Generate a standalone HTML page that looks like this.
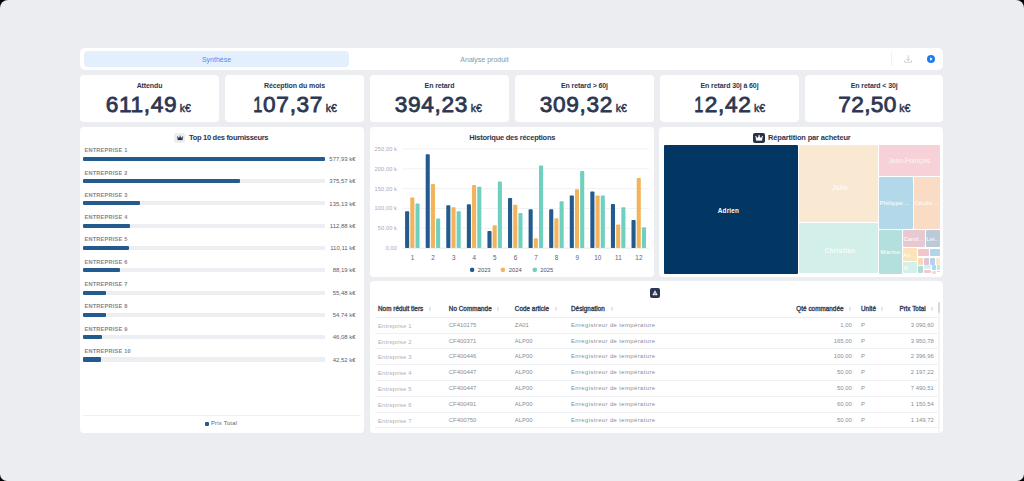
<!DOCTYPE html><html><head><meta charset="utf-8"><style>
*{margin:0;padding:0;box-sizing:border-box}
html,body{width:1024px;height:481px;background:#000;overflow:hidden}
body{font-family:"Liberation Sans", sans-serif;color:#2d3650}
.frame{position:absolute;left:0;top:0;width:1024px;height:481px;border-radius:8px 8px 7px 7px;background:#ebedf1;overflow:hidden}
.card{position:absolute;background:#fff;border-radius:4px}
.abs{position:absolute;white-space:nowrap}
</style></head><body><div class="frame">
<div class="card" style="left:80px;top:48px;width:863px;height:22px;border-radius:5px"></div>
<div class="abs" style="left:84px;top:51px;width:265px;height:16px;border-radius:4px;background:#e3effc"></div>
<div class="abs" style="left:84px;top:51.8px;width:265px;height:16px;line-height:16px;text-align:center;font-size:7px;color:#4a8ff2">Synthèse</div>
<div class="abs" style="left:384px;top:51.8px;width:201px;height:16px;line-height:16px;text-align:center;font-size:7px;color:#8d96a3">Analyse produit</div>
<div class="abs" style="left:890.5px;top:52px;width:1px;height:14px;background:#f0f1f3"></div>
<svg class="abs" style="left:903px;top:54px" width="10" height="10" viewBox="0 0 10 10"><path d="M5.2 1.2v5.3M3.4 4.8l1.8 1.8 1.8-1.8M1.8 6.4v1.9h6.8V6.4" fill="none" stroke="#bcc3cd" stroke-width="0.75"/></svg>
<svg class="abs" style="left:926.3px;top:54.3px" width="10" height="10" viewBox="0 0 10 10"><circle cx="5" cy="5" r="4" fill="#1b7cf4"/><path d="M4.1 3.3L6.6 5 4.1 6.7z" fill="#fff"/></svg>
<div class="card" style="left:80.00px;top:75px;width:139.00px;height:47px"></div>
<div class="abs" style="left:80.00px;top:80.7px;width:139.00px;text-align:center;font-size:7px;line-height:9px;font-weight:bold;letter-spacing:-0.1px;color:#2d3650">Attendu</div>
<div class="abs" style="left:80.00px;top:92.2px;width:139.00px;margin-left:-1.2px;text-align:center;line-height:24px;font-weight:bold;color:#2d3650"><span style="font-size:22.7px;letter-spacing:0.65px;font-weight:normal;-webkit-text-stroke:0.8px #2d3650">611,49</span><span style="font-size:10.5px;margin-left:2.6px;font-weight:normal;-webkit-text-stroke:0.45px #2d3650">k€</span></div>
<div class="card" style="left:225.00px;top:75px;width:139.00px;height:47px"></div>
<div class="abs" style="left:225.00px;top:80.7px;width:139.00px;text-align:center;font-size:7px;line-height:9px;font-weight:bold;letter-spacing:-0.1px;color:#2d3650">Réception du mois</div>
<div class="abs" style="left:225.00px;top:92.2px;width:139.00px;margin-left:-1.2px;text-align:center;line-height:24px;font-weight:bold;color:#2d3650"><span style="font-size:22.7px;letter-spacing:0.65px;font-weight:normal;-webkit-text-stroke:0.8px #2d3650"><span style="display:inline-block;transform:scaleX(0.72);transform-origin:85% 50%">1</span>07,37</span><span style="font-size:10.5px;margin-left:2.6px;font-weight:normal;-webkit-text-stroke:0.45px #2d3650">k€</span></div>
<div class="card" style="left:370.00px;top:75px;width:139.00px;height:47px"></div>
<div class="abs" style="left:370.00px;top:80.7px;width:139.00px;text-align:center;font-size:7px;line-height:9px;font-weight:bold;letter-spacing:-0.1px;color:#2d3650">En retard</div>
<div class="abs" style="left:370.00px;top:92.2px;width:139.00px;margin-left:-1.2px;text-align:center;line-height:24px;font-weight:bold;color:#2d3650"><span style="font-size:22.7px;letter-spacing:0.65px;font-weight:normal;-webkit-text-stroke:0.8px #2d3650">394,23</span><span style="font-size:10.5px;margin-left:2.6px;font-weight:normal;-webkit-text-stroke:0.45px #2d3650">k€</span></div>
<div class="card" style="left:515.00px;top:75px;width:139.00px;height:47px"></div>
<div class="abs" style="left:515.00px;top:80.7px;width:139.00px;text-align:center;font-size:7px;line-height:9px;font-weight:bold;letter-spacing:-0.1px;color:#2d3650">En retard > 60j</div>
<div class="abs" style="left:515.00px;top:92.2px;width:139.00px;margin-left:-1.2px;text-align:center;line-height:24px;font-weight:bold;color:#2d3650"><span style="font-size:22.7px;letter-spacing:0.65px;font-weight:normal;-webkit-text-stroke:0.8px #2d3650">309,32</span><span style="font-size:10.5px;margin-left:2.6px;font-weight:normal;-webkit-text-stroke:0.45px #2d3650">k€</span></div>
<div class="card" style="left:660.00px;top:75px;width:139.00px;height:47px"></div>
<div class="abs" style="left:660.00px;top:80.7px;width:139.00px;text-align:center;font-size:7px;line-height:9px;font-weight:bold;letter-spacing:-0.1px;color:#2d3650">En retard 30j à 60j</div>
<div class="abs" style="left:660.00px;top:92.2px;width:139.00px;margin-left:-1.2px;text-align:center;line-height:24px;font-weight:bold;color:#2d3650"><span style="font-size:22.7px;letter-spacing:0.65px;font-weight:normal;-webkit-text-stroke:0.8px #2d3650"><span style="display:inline-block;transform:scaleX(0.72);transform-origin:85% 50%">1</span>2,42</span><span style="font-size:10.5px;margin-left:2.6px;font-weight:normal;-webkit-text-stroke:0.45px #2d3650">k€</span></div>
<div class="card" style="left:805.00px;top:75px;width:138.30px;height:47px"></div>
<div class="abs" style="left:805.00px;top:80.7px;width:138.30px;text-align:center;font-size:7px;line-height:9px;font-weight:bold;letter-spacing:-0.1px;color:#2d3650">En retard < 30j</div>
<div class="abs" style="left:805.00px;top:92.2px;width:138.30px;margin-left:0.2px;text-align:center;line-height:24px;font-weight:bold;color:#2d3650"><span style="font-size:22.7px;letter-spacing:0.35px;font-weight:normal;-webkit-text-stroke:0.8px #2d3650">72,50</span><span style="font-size:10.5px;margin-left:2.6px;font-weight:normal;-webkit-text-stroke:0.45px #2d3650">k€</span></div>
<div class="card" style="left:80px;top:127px;width:284px;height:306px"></div>
<div class="abs" style="left:174px;top:133px;width:11px;height:10px;border-radius:2px;background:#eceef2"></div>
<svg class="abs" style="left:174.5px;top:132.8px" width="10" height="10" viewBox="0 0 10 10"><g transform="translate(5.1 5) scale(0.82) translate(-5.1 -5)"><path d="M2.3 7.4L1.8 3.7 3.7 5.1 5.1 2.6 6.5 5.1 8.4 3.7 7.9 7.4Z" fill="#2d3650" stroke="#2d3650" stroke-width="0.35" stroke-linejoin="round"/><circle cx="1.8" cy="3.5" r="0.55" fill="#2d3650"/><circle cx="5.1" cy="2.4" r="0.55" fill="#2d3650"/><circle cx="8.4" cy="3.5" r="0.55" fill="#2d3650"/></g></svg>
<div class="abs" style="left:189px;top:133px;font-size:7.5px;line-height:9px;font-weight:bold;letter-spacing:-0.3px;color:#2d3650">Top 10 des fournisseurs</div>
<div class="abs" style="left:84.5px;top:147.20px;font-size:5.6px;line-height:7px;letter-spacing:0.22px;color:#838893;font-weight:bold">ENTREPRISE 1</div>
<div class="abs" style="left:83px;top:156.70px;width:242px;height:4.2px;background:#eceef2;border-radius:1px"></div>
<div class="abs" style="left:83px;top:156.70px;width:242.00px;height:4.2px;background:#235b8e;border-radius:1px"></div>
<div class="abs" style="left:255.7px;top:155.90px;width:100px;text-align:right;font-size:6px;line-height:7px;color:#596070">577,93 k€</div>
<div class="abs" style="left:84.5px;top:169.50px;font-size:5.6px;line-height:7px;letter-spacing:0.22px;color:#838893;font-weight:bold">ENTREPRISE 2</div>
<div class="abs" style="left:83px;top:179.00px;width:242px;height:4.2px;background:#eceef2;border-radius:1px"></div>
<div class="abs" style="left:83px;top:179.00px;width:157.26px;height:4.2px;background:#235b8e;border-radius:1px"></div>
<div class="abs" style="left:255.7px;top:178.20px;width:100px;text-align:right;font-size:6px;line-height:7px;color:#596070">375,57 k€</div>
<div class="abs" style="left:84.5px;top:191.80px;font-size:5.6px;line-height:7px;letter-spacing:0.22px;color:#838893;font-weight:bold">ENTREPRISE 3</div>
<div class="abs" style="left:83px;top:201.30px;width:242px;height:4.2px;background:#eceef2;border-radius:1px"></div>
<div class="abs" style="left:83px;top:201.30px;width:56.58px;height:4.2px;background:#235b8e;border-radius:1px"></div>
<div class="abs" style="left:255.7px;top:200.50px;width:100px;text-align:right;font-size:6px;line-height:7px;color:#596070">135,13 k€</div>
<div class="abs" style="left:84.5px;top:214.10px;font-size:5.6px;line-height:7px;letter-spacing:0.22px;color:#838893;font-weight:bold">ENTREPRISE 4</div>
<div class="abs" style="left:83px;top:223.60px;width:242px;height:4.2px;background:#eceef2;border-radius:1px"></div>
<div class="abs" style="left:83px;top:223.60px;width:47.27px;height:4.2px;background:#235b8e;border-radius:1px"></div>
<div class="abs" style="left:255.7px;top:222.80px;width:100px;text-align:right;font-size:6px;line-height:7px;color:#596070">112,88 k€</div>
<div class="abs" style="left:84.5px;top:236.40px;font-size:5.6px;line-height:7px;letter-spacing:0.22px;color:#838893;font-weight:bold">ENTREPRISE 5</div>
<div class="abs" style="left:83px;top:245.90px;width:242px;height:4.2px;background:#eceef2;border-radius:1px"></div>
<div class="abs" style="left:83px;top:245.90px;width:46.11px;height:4.2px;background:#235b8e;border-radius:1px"></div>
<div class="abs" style="left:255.7px;top:245.10px;width:100px;text-align:right;font-size:6px;line-height:7px;color:#596070">110,11 k€</div>
<div class="abs" style="left:84.5px;top:258.70px;font-size:5.6px;line-height:7px;letter-spacing:0.22px;color:#838893;font-weight:bold">ENTREPRISE 6</div>
<div class="abs" style="left:83px;top:268.20px;width:242px;height:4.2px;background:#eceef2;border-radius:1px"></div>
<div class="abs" style="left:83px;top:268.20px;width:36.93px;height:4.2px;background:#235b8e;border-radius:1px"></div>
<div class="abs" style="left:255.7px;top:267.40px;width:100px;text-align:right;font-size:6px;line-height:7px;color:#596070">88,19 k€</div>
<div class="abs" style="left:84.5px;top:281.00px;font-size:5.6px;line-height:7px;letter-spacing:0.22px;color:#838893;font-weight:bold">ENTREPRISE 7</div>
<div class="abs" style="left:83px;top:290.50px;width:242px;height:4.2px;background:#eceef2;border-radius:1px"></div>
<div class="abs" style="left:83px;top:290.50px;width:23.23px;height:4.2px;background:#235b8e;border-radius:1px"></div>
<div class="abs" style="left:255.7px;top:289.70px;width:100px;text-align:right;font-size:6px;line-height:7px;color:#596070">55,48 k€</div>
<div class="abs" style="left:84.5px;top:303.30px;font-size:5.6px;line-height:7px;letter-spacing:0.22px;color:#838893;font-weight:bold">ENTREPRISE 8</div>
<div class="abs" style="left:83px;top:312.80px;width:242px;height:4.2px;background:#eceef2;border-radius:1px"></div>
<div class="abs" style="left:83px;top:312.80px;width:22.92px;height:4.2px;background:#235b8e;border-radius:1px"></div>
<div class="abs" style="left:255.7px;top:312.00px;width:100px;text-align:right;font-size:6px;line-height:7px;color:#596070">54,74 k€</div>
<div class="abs" style="left:84.5px;top:325.60px;font-size:5.6px;line-height:7px;letter-spacing:0.22px;color:#838893;font-weight:bold">ENTREPRISE 9</div>
<div class="abs" style="left:83px;top:335.10px;width:242px;height:4.2px;background:#eceef2;border-radius:1px"></div>
<div class="abs" style="left:83px;top:335.10px;width:19.30px;height:4.2px;background:#235b8e;border-radius:1px"></div>
<div class="abs" style="left:255.7px;top:334.30px;width:100px;text-align:right;font-size:6px;line-height:7px;color:#596070">46,08 k€</div>
<div class="abs" style="left:84.5px;top:347.90px;font-size:5.6px;line-height:7px;letter-spacing:0.22px;color:#838893;font-weight:bold">ENTREPRISE 10</div>
<div class="abs" style="left:83px;top:357.40px;width:242px;height:4.2px;background:#eceef2;border-radius:1px"></div>
<div class="abs" style="left:83px;top:357.40px;width:17.80px;height:4.2px;background:#235b8e;border-radius:1px"></div>
<div class="abs" style="left:255.7px;top:356.60px;width:100px;text-align:right;font-size:6px;line-height:7px;color:#596070">42,52 k€</div>
<div class="abs" style="left:83px;top:415px;width:278px;height:1px;background:#eef0f3"></div>
<div class="abs" style="left:205px;top:422px;width:4px;height:4px;border-radius:1px;background:#235b8e"></div>
<div class="abs" style="left:211px;top:420px;font-size:5.8px;line-height:7px;letter-spacing:0.25px;color:#5a6272">Prix Total</div>
<div class="card" style="left:370px;top:127px;width:284px;height:150px"></div>
<div class="abs" style="left:370px;top:132.5px;width:284.5px;text-align:center;font-size:7.5px;line-height:9px;font-weight:bold;letter-spacing:-0.25px;color:#2d3650">Historique des réceptions</div>
<svg class="abs" style="left:370px;top:127px" width="285" height="150" viewBox="370 127 285 150"><rect x="402.3" y="247.60" width="247" height="1" fill="#e3e6ea"/><text x="397" y="250.10" text-anchor="end" font-size="5.6" letter-spacing="0.12" fill="#a3aab6" font-family='"Liberation Sans", sans-serif'>0,00</text><rect x="402.3" y="227.78" width="247" height="1" fill="#f1f2f4"/><text x="397" y="230.28" text-anchor="end" font-size="5.6" letter-spacing="0.12" fill="#a3aab6" font-family='"Liberation Sans", sans-serif'>50,00 k</text><rect x="402.3" y="207.96" width="247" height="1" fill="#f1f2f4"/><text x="397" y="210.46" text-anchor="end" font-size="5.6" letter-spacing="0.12" fill="#a3aab6" font-family='"Liberation Sans", sans-serif'>100,00 k</text><rect x="402.3" y="188.14" width="247" height="1" fill="#f1f2f4"/><text x="397" y="190.64" text-anchor="end" font-size="5.6" letter-spacing="0.12" fill="#a3aab6" font-family='"Liberation Sans", sans-serif'>150,00 k</text><rect x="402.3" y="168.32" width="247" height="1" fill="#f1f2f4"/><text x="397" y="170.82" text-anchor="end" font-size="5.6" letter-spacing="0.12" fill="#a3aab6" font-family='"Liberation Sans", sans-serif'>200,00 k</text><rect x="402.3" y="148.50" width="247" height="1" fill="#f1f2f4"/><text x="397" y="151.00" text-anchor="end" font-size="5.6" letter-spacing="0.12" fill="#a3aab6" font-family='"Liberation Sans", sans-serif'>250,00 k</text><rect x="405.09" y="211.35" width="4.1" height="36.75" rx="0.8" fill="#235b8e"/><rect x="410.29" y="197.48" width="4.1" height="50.62" rx="0.8" fill="#f2b35c"/><rect x="415.49" y="203.47" width="4.1" height="44.63" rx="0.8" fill="#6fd0c0"/><text x="412.59" y="259.5" text-anchor="middle" font-size="6.3" letter-spacing="0.2" fill="#5a6170" font-family='"Liberation Sans", sans-serif'>1</text><rect x="425.68" y="154.15" width="4.1" height="93.95" rx="0.8" fill="#235b8e"/><rect x="430.88" y="183.88" width="4.1" height="64.22" rx="0.8" fill="#f2b35c"/><rect x="436.07" y="218.57" width="4.1" height="29.53" rx="0.8" fill="#6fd0c0"/><text x="433.18" y="259.5" text-anchor="middle" font-size="6.3" letter-spacing="0.2" fill="#5a6170" font-family='"Liberation Sans", sans-serif'>2</text><rect x="446.26" y="205.29" width="4.1" height="42.81" rx="0.8" fill="#235b8e"/><rect x="451.46" y="207.27" width="4.1" height="40.83" rx="0.8" fill="#f2b35c"/><rect x="456.66" y="211.35" width="4.1" height="36.75" rx="0.8" fill="#6fd0c0"/><text x="453.76" y="259.5" text-anchor="middle" font-size="6.3" letter-spacing="0.2" fill="#5a6170" font-family='"Liberation Sans", sans-serif'>3</text><rect x="466.84" y="204.18" width="4.1" height="43.92" rx="0.8" fill="#235b8e"/><rect x="472.04" y="185.11" width="4.1" height="62.99" rx="0.8" fill="#f2b35c"/><rect x="477.24" y="186.82" width="4.1" height="61.28" rx="0.8" fill="#6fd0c0"/><text x="474.34" y="259.5" text-anchor="middle" font-size="6.3" letter-spacing="0.2" fill="#5a6170" font-family='"Liberation Sans", sans-serif'>4</text><rect x="487.43" y="231.05" width="4.1" height="17.05" rx="0.8" fill="#235b8e"/><rect x="492.62" y="225.23" width="4.1" height="22.87" rx="0.8" fill="#f2b35c"/><rect x="497.82" y="181.39" width="4.1" height="66.71" rx="0.8" fill="#6fd0c0"/><text x="494.93" y="259.5" text-anchor="middle" font-size="6.3" letter-spacing="0.2" fill="#5a6170" font-family='"Liberation Sans", sans-serif'>5</text><rect x="508.01" y="197.96" width="4.1" height="50.14" rx="0.8" fill="#235b8e"/><rect x="513.21" y="204.69" width="4.1" height="43.41" rx="0.8" fill="#f2b35c"/><rect x="518.41" y="213.06" width="4.1" height="35.04" rx="0.8" fill="#6fd0c0"/><text x="515.51" y="259.5" text-anchor="middle" font-size="6.3" letter-spacing="0.2" fill="#5a6170" font-family='"Liberation Sans", sans-serif'>6</text><rect x="528.59" y="209.25" width="4.1" height="38.85" rx="0.8" fill="#235b8e"/><rect x="533.79" y="238.19" width="4.1" height="9.91" rx="0.8" fill="#f2b35c"/><rect x="538.99" y="165.45" width="4.1" height="82.65" rx="0.8" fill="#6fd0c0"/><text x="536.09" y="259.5" text-anchor="middle" font-size="6.3" letter-spacing="0.2" fill="#5a6170" font-family='"Liberation Sans", sans-serif'>7</text><rect x="549.17" y="209.25" width="4.1" height="38.85" rx="0.8" fill="#235b8e"/><rect x="554.38" y="218.17" width="4.1" height="29.93" rx="0.8" fill="#f2b35c"/><rect x="559.57" y="201.32" width="4.1" height="46.78" rx="0.8" fill="#6fd0c0"/><text x="556.67" y="259.5" text-anchor="middle" font-size="6.3" letter-spacing="0.2" fill="#5a6170" font-family='"Liberation Sans", sans-serif'>8</text><rect x="569.76" y="195.38" width="4.1" height="52.72" rx="0.8" fill="#235b8e"/><rect x="574.96" y="189.19" width="4.1" height="58.91" rx="0.8" fill="#f2b35c"/><rect x="580.16" y="171.00" width="4.1" height="77.10" rx="0.8" fill="#6fd0c0"/><text x="577.26" y="259.5" text-anchor="middle" font-size="6.3" letter-spacing="0.2" fill="#5a6170" font-family='"Liberation Sans", sans-serif'>9</text><rect x="590.34" y="191.41" width="4.1" height="56.69" rx="0.8" fill="#235b8e"/><rect x="595.54" y="195.38" width="4.1" height="52.72" rx="0.8" fill="#f2b35c"/><rect x="600.74" y="195.58" width="4.1" height="52.52" rx="0.8" fill="#6fd0c0"/><text x="597.84" y="259.5" text-anchor="middle" font-size="6.3" letter-spacing="0.2" fill="#5a6170" font-family='"Liberation Sans", sans-serif'>10</text><rect x="610.92" y="204.10" width="4.1" height="44.00" rx="0.8" fill="#235b8e"/><rect x="616.12" y="224.43" width="4.1" height="23.67" rx="0.8" fill="#f2b35c"/><rect x="621.32" y="207.27" width="4.1" height="40.83" rx="0.8" fill="#6fd0c0"/><text x="618.42" y="259.5" text-anchor="middle" font-size="6.3" letter-spacing="0.2" fill="#5a6170" font-family='"Liberation Sans", sans-serif'>11</text><rect x="631.51" y="219.96" width="4.1" height="28.14" rx="0.8" fill="#235b8e"/><rect x="636.71" y="178.10" width="4.1" height="70.00" rx="0.8" fill="#f2b35c"/><rect x="641.91" y="227.33" width="4.1" height="20.77" rx="0.8" fill="#6fd0c0"/><text x="639.01" y="259.5" text-anchor="middle" font-size="6.3" letter-spacing="0.2" fill="#5a6170" font-family='"Liberation Sans", sans-serif'>12</text><rect x="470" y="267.8" width="4.2" height="4.2" rx="1.4" fill="#235b8e"/><text x="477.7" y="272.2" font-size="5.8" fill="#4a5262" font-family='"Liberation Sans", sans-serif'>2023</text><rect x="500.8" y="267.8" width="4.2" height="4.2" rx="1.4" fill="#f2b35c"/><text x="508.8" y="272.2" font-size="5.8" fill="#4a5262" font-family='"Liberation Sans", sans-serif'>2024</text><rect x="532.7" y="267.8" width="4.2" height="4.2" rx="1.4" fill="#6fd0c0"/><text x="540.3" y="272.2" font-size="5.8" fill="#4a5262" font-family='"Liberation Sans", sans-serif'>2025</text></svg>
<div class="card" style="left:659px;top:127px;width:284.3px;height:150px"></div>
<div class="abs" style="left:753px;top:132.8px;width:11.5px;height:10px;border-radius:2px;background:#2a3147"></div>
<svg class="abs" style="left:753.6px;top:132.6px" width="10" height="10" viewBox="0 0 10 10"><path d="M2.3 7.4L1.8 3.7 3.7 5.1 5.1 2.6 6.5 5.1 8.4 3.7 7.9 7.4Z" fill="#ffffff" stroke="#ffffff" stroke-width="0.35" stroke-linejoin="round"/><circle cx="1.8" cy="3.5" r="0.55" fill="#ffffff"/><circle cx="5.1" cy="2.4" r="0.55" fill="#ffffff"/><circle cx="8.4" cy="3.5" r="0.55" fill="#ffffff"/></svg>
<div class="abs" style="left:768px;top:132.5px;font-size:7.5px;line-height:9px;font-weight:bold;letter-spacing:-0.17px;color:#2d3650">Répartition par acheteur</div>
<div class="abs" style="left:664px;top:145px;width:134.00px;height:128.50px;background:#023763;border-radius:1px"></div>
<div class="abs" style="left:799px;top:145px;width:79.00px;height:76.60px;background:#fae9d2;border-radius:1px"></div>
<div class="abs" style="left:799px;top:222.6px;width:79.00px;height:50.90px;background:#d3efea;border-radius:1px"></div>
<div class="abs" style="left:879px;top:145px;width:61.00px;height:31.10px;background:#f6d1d8;border-radius:1px"></div>
<div class="abs" style="left:879px;top:177.1px;width:34.00px;height:51.90px;background:#b3d8ea;border-radius:1px"></div>
<div class="abs" style="left:914px;top:177.1px;width:26.00px;height:51.90px;background:#fadcc5;border-radius:1px"></div>
<div class="abs" style="left:879px;top:230px;width:22.60px;height:43.50px;background:#b3e0dc;border-radius:1px"></div>
<div class="abs" style="left:902.6px;top:230px;width:22.60px;height:17.30px;background:#e8c9d2;border-radius:1px"></div>
<div class="abs" style="left:926.2px;top:230px;width:13.80px;height:17.30px;background:#bacad9;border-radius:1px"></div>
<div class="abs" style="left:902.6px;top:248.3px;width:14.00px;height:12.30px;background:#fbe3bb;border-radius:1px"></div>
<div class="abs" style="left:902.6px;top:261.6px;width:14.00px;height:11.90px;background:#d3f0eb;border-radius:1px"></div>
<div class="abs" style="left:917.9px;top:248.5px;width:11.30px;height:7.90px;background:#f2c6cc;border-radius:1px"></div>
<div class="abs" style="left:930.2px;top:248.5px;width:9.80px;height:7.90px;background:#b1d6ea;border-radius:1px"></div>
<div class="abs" style="left:917.9px;top:257.5px;width:5.30px;height:7.10px;background:#fbd7ba;border-radius:1px"></div>
<div class="abs" style="left:924.2px;top:257.5px;width:5.00px;height:7.10px;background:#dec5d6;border-radius:1px"></div>
<div class="abs" style="left:930.2px;top:257.5px;width:4.60px;height:7.10px;background:#b5d0f0;border-radius:1px"></div>
<div class="abs" style="left:935.6px;top:257.5px;width:4.40px;height:7.10px;background:#fde8c6;border-radius:1px"></div>
<div class="abs" style="left:917.9px;top:265.6px;width:5.30px;height:7.90px;background:#aedcd7;border-radius:1px"></div>
<div class="abs" style="left:924.2px;top:265.4px;width:6.40px;height:4.00px;background:#d5f2ec;border-radius:1px"></div>
<div class="abs" style="left:924.2px;top:270.3px;width:6.40px;height:3.20px;background:#f3c8ce;border-radius:1px"></div>
<div class="abs" style="left:931.6px;top:265.4px;width:4.40px;height:4.80px;background:#a9d9f6;border-radius:1px"></div>
<div class="abs" style="left:937px;top:265.4px;width:3.00px;height:4.80px;background:#a8eef4;border-radius:1px"></div>
<div class="abs" style="left:931.6px;top:271px;width:4.40px;height:2.50px;background:#fbd9bf;border-radius:1px"></div>
<div class="abs" style="left:937px;top:271px;width:3.00px;height:1.40px;background:#f3c8ce;border-radius:1px"></div>
<div class="abs" style="left:664px;top:145px;width:134.00px;height:128.50px;overflow:hidden"><div class="abs" style="left:24.50px;top:61.70px;width:80px;text-align:center;font-size:6.4px;line-height:8px;font-weight:bold;letter-spacing:0.2px;color:rgba(255,255,255,1)">Adrien</div></div>
<div class="abs" style="left:799px;top:145px;width:79.00px;height:76.60px;overflow:hidden"><div class="abs" style="left:1.00px;top:38.90px;width:80px;text-align:center;font-size:6.4px;line-height:8px;font-weight:bold;letter-spacing:0.3px;color:rgba(255,255,255,0.8)">Julie</div></div>
<div class="abs" style="left:799px;top:222.6px;width:79.00px;height:50.90px;overflow:hidden"><div class="abs" style="left:1.00px;top:24.90px;width:80px;text-align:center;font-size:6.4px;line-height:8px;font-weight:bold;letter-spacing:0.35px;color:rgba(255,255,255,0.8)">Christian</div></div>
<div class="abs" style="left:879px;top:145px;width:61.00px;height:31.10px;overflow:hidden"><div class="abs" style="left:-9.70px;top:11.90px;width:80px;text-align:center;font-size:6.4px;line-height:8px;font-weight:normal;letter-spacing:0.1px;color:rgba(255,255,255,0.8)">Jean-François</div></div>
<div class="abs" style="left:879px;top:177.1px;width:34.00px;height:51.90px;overflow:hidden"><div class="abs" style="left:-24.80px;top:22.40px;width:80px;text-align:center;font-size:6.0px;line-height:8px;font-weight:bold;letter-spacing:0.0px;color:rgba(255,255,255,0.8)">Philippe <span style="font-size:0.75em">…</span></div></div>
<div class="abs" style="left:914px;top:177.1px;width:26.00px;height:51.90px;overflow:hidden"><div class="abs" style="left:-27.70px;top:22.40px;width:80px;text-align:center;font-size:6.0px;line-height:8px;font-weight:bold;letter-spacing:0.0px;color:rgba(255,255,255,0.8)">Cécile <span style="font-size:0.75em">…</span></div></div>
<div class="abs" style="left:879px;top:230px;width:22.60px;height:43.50px;overflow:hidden"><div class="abs" style="left:-28.60px;top:18.00px;width:80px;text-align:center;font-size:6.0px;line-height:8px;font-weight:bold;letter-spacing:0.05px;color:rgba(255,255,255,0.8)">Marine</div></div>
<div class="abs" style="left:902.6px;top:230px;width:22.60px;height:17.30px;overflow:hidden"><div class="abs" style="left:-29.40px;top:5.20px;width:80px;text-align:center;font-size:5.8px;line-height:8px;font-weight:bold;letter-spacing:0.0px;color:rgba(255,255,255,0.8)">Carol<span style="font-size:0.75em">…</span></div></div>
<div class="abs" style="left:926.2px;top:230px;width:13.80px;height:17.30px;overflow:hidden"><div class="abs" style="left:-33.70px;top:5.20px;width:80px;text-align:center;font-size:5.6px;line-height:8px;font-weight:bold;letter-spacing:0px;color:rgba(255,255,255,0.8)">Lei<span style="font-size:0.75em">…</span></div></div>
<div class="abs" style="left:902.6px;top:248.3px;width:14.00px;height:12.30px;overflow:hidden"><div class="abs" style="left:-33.90px;top:2.50px;width:80px;text-align:center;font-size:5.6px;line-height:8px;font-weight:bold;letter-spacing:0px;color:rgba(255,255,255,0.8)">Au<span style="font-size:0.75em">…</span></div></div>
<div class="abs" style="left:902.6px;top:261.6px;width:14.00px;height:11.90px;overflow:hidden"><div class="abs" style="left:-34.70px;top:2.00px;width:80px;text-align:center;font-size:5.6px;line-height:8px;font-weight:bold;letter-spacing:0px;color:rgba(255,255,255,0.8)">M<span style="font-size:0.75em">…</span></div></div>
<div class="card" style="left:370px;top:281px;width:573.3px;height:152px"></div>
<div class="abs" style="left:650px;top:288px;width:10px;height:10px;border-radius:2px;background:#2d3650"></div>
<svg class="abs" style="left:650px;top:288px" width="10" height="10" viewBox="0 0 10 10"><path d="M5 2.6L7.3 7H2.7z" fill="#fff" stroke="#fff" stroke-width="0.4" stroke-linejoin="round"/><path d="M5 4.4V6.6" stroke="#2d3650" stroke-width="0.7"/></svg>
<div class="abs" style="left:378px;top:304.9px;font-size:6.3px;line-height:8px;font-weight:normal;-webkit-text-stroke:0.35px #3a4050;letter-spacing:0.05px;color:#3a4050">Nom réduit tiers</div>
<svg class="abs" style="left:428.20px;top:306px" width="4" height="6" viewBox="0 0 4 6"><path d="M0.8 2.4L2 0.8 3.2 2.4z M0.8 3.5L2 5.1 3.2 3.5z" fill="#c9cdd4"/></svg>
<div class="abs" style="left:448.8px;top:304.9px;font-size:6.3px;line-height:8px;font-weight:normal;-webkit-text-stroke:0.35px #3a4050;letter-spacing:0.05px;color:#3a4050">No Commande</div>
<svg class="abs" style="left:496.30px;top:306px" width="4" height="6" viewBox="0 0 4 6"><path d="M0.8 2.4L2 0.8 3.2 2.4z M0.8 3.5L2 5.1 3.2 3.5z" fill="#c9cdd4"/></svg>
<div class="abs" style="left:514.8px;top:304.9px;font-size:6.3px;line-height:8px;font-weight:normal;-webkit-text-stroke:0.35px #3a4050;letter-spacing:0.05px;color:#3a4050">Code article</div>
<svg class="abs" style="left:553.70px;top:306px" width="4" height="6" viewBox="0 0 4 6"><path d="M0.8 2.4L2 0.8 3.2 2.4z M0.8 3.5L2 5.1 3.2 3.5z" fill="#c9cdd4"/></svg>
<div class="abs" style="left:571px;top:304.9px;font-size:6.3px;line-height:8px;font-weight:normal;-webkit-text-stroke:0.35px #3a4050;letter-spacing:0.05px;color:#3a4050">Désignation</div>
<svg class="abs" style="left:609.70px;top:306px" width="4" height="6" viewBox="0 0 4 6"><path d="M0.8 2.4L2 0.8 3.2 2.4z M0.8 3.5L2 5.1 3.2 3.5z" fill="#c9cdd4"/></svg>
<div class="abs" style="left:743.5px;top:304.9px;width:100px;text-align:right;font-size:6.3px;line-height:8px;font-weight:normal;-webkit-text-stroke:0.35px #3a4050;letter-spacing:0.05px;color:#3a4050">Qté commandée</div>
<svg class="abs" style="left:847.60px;top:306px" width="4" height="6" viewBox="0 0 4 6"><path d="M0.8 2.4L2 0.8 3.2 2.4z M0.8 3.5L2 5.1 3.2 3.5z" fill="#c9cdd4"/></svg>
<div class="abs" style="left:861px;top:304.9px;font-size:6.3px;line-height:8px;font-weight:normal;-webkit-text-stroke:0.35px #3a4050;letter-spacing:0.05px;color:#3a4050">Unité</div>
<svg class="abs" style="left:880.40px;top:306px" width="4" height="6" viewBox="0 0 4 6"><path d="M0.8 2.4L2 0.8 3.2 2.4z M0.8 3.5L2 5.1 3.2 3.5z" fill="#c9cdd4"/></svg>
<div class="abs" style="left:825.7px;top:304.9px;width:100px;text-align:right;font-size:6.3px;line-height:8px;font-weight:normal;-webkit-text-stroke:0.35px #3a4050;letter-spacing:0.05px;color:#3a4050">Prix Total</div>
<svg class="abs" style="left:929.60px;top:306px" width="4" height="6" viewBox="0 0 4 6"><path d="M0.8 2.4L2 0.8 3.2 2.4z M0.8 3.5L2 5.1 3.2 3.5z" fill="#c9cdd4"/></svg>
<div class="abs" style="left:938px;top:302px;width:2px;height:131px;background:#f3f4f6"></div>
<div class="abs" style="left:938px;top:302px;width:2px;height:11px;border-radius:1px;background:#d5d9df"></div>
<div class="abs" style="left:375px;top:317px;width:563px;height:1px;background:#eceef1"></div>
<div class="abs" style="left:375px;top:332.61px;width:563px;height:1px;background:#f0f1f4"></div>
<div class="abs" style="left:378px;top:321.80px;font-size:5.9px;line-height:8px;color:#878e9a;color:#a9afb9;letter-spacing:0.15px">Entreprise 1</div>
<div class="abs" style="left:448.8px;top:320.80px;font-size:5.9px;line-height:8px;color:#878e9a">CF410175</div>
<div class="abs" style="left:514.8px;top:320.80px;font-size:5.9px;line-height:8px;color:#878e9a">ZA01</div>
<div class="abs" style="left:571px;top:320.80px;font-size:5.9px;line-height:8px;color:#878e9a;letter-spacing:0.4px">Enregistreur de température</div>
<div class="abs" style="left:751.8px;top:320.80px;width:100px;text-align:right;font-size:5.9px;line-height:8px;color:#878e9a">1,00</div>
<div class="abs" style="left:861px;top:320.80px;font-size:5.9px;line-height:8px;color:#878e9a">P</div>
<div class="abs" style="left:833.8px;top:320.80px;width:100px;text-align:right;font-size:5.9px;line-height:8px;color:#878e9a">3 090,60</div>
<div class="abs" style="left:375px;top:348.42px;width:563px;height:1px;background:#f0f1f4"></div>
<div class="abs" style="left:378px;top:337.61px;font-size:5.9px;line-height:8px;color:#878e9a;color:#a9afb9;letter-spacing:0.15px">Entreprise 2</div>
<div class="abs" style="left:448.8px;top:336.61px;font-size:5.9px;line-height:8px;color:#878e9a">CF400371</div>
<div class="abs" style="left:514.8px;top:336.61px;font-size:5.9px;line-height:8px;color:#878e9a">ALP00</div>
<div class="abs" style="left:571px;top:336.61px;font-size:5.9px;line-height:8px;color:#878e9a;letter-spacing:0.4px">Enregistreur de température</div>
<div class="abs" style="left:751.8px;top:336.61px;width:100px;text-align:right;font-size:5.9px;line-height:8px;color:#878e9a">165,00</div>
<div class="abs" style="left:861px;top:336.61px;font-size:5.9px;line-height:8px;color:#878e9a">P</div>
<div class="abs" style="left:833.8px;top:336.61px;width:100px;text-align:right;font-size:5.9px;line-height:8px;color:#878e9a">3 950,78</div>
<div class="abs" style="left:375px;top:364.23px;width:563px;height:1px;background:#f0f1f4"></div>
<div class="abs" style="left:378px;top:353.42px;font-size:5.9px;line-height:8px;color:#878e9a;color:#a9afb9;letter-spacing:0.15px">Entreprise 3</div>
<div class="abs" style="left:448.8px;top:352.42px;font-size:5.9px;line-height:8px;color:#878e9a">CF400446</div>
<div class="abs" style="left:514.8px;top:352.42px;font-size:5.9px;line-height:8px;color:#878e9a">ALP00</div>
<div class="abs" style="left:571px;top:352.42px;font-size:5.9px;line-height:8px;color:#878e9a;letter-spacing:0.4px">Enregistreur de température</div>
<div class="abs" style="left:751.8px;top:352.42px;width:100px;text-align:right;font-size:5.9px;line-height:8px;color:#878e9a">100,00</div>
<div class="abs" style="left:861px;top:352.42px;font-size:5.9px;line-height:8px;color:#878e9a">P</div>
<div class="abs" style="left:833.8px;top:352.42px;width:100px;text-align:right;font-size:5.9px;line-height:8px;color:#878e9a">2 396,96</div>
<div class="abs" style="left:375px;top:380.04px;width:563px;height:1px;background:#f0f1f4"></div>
<div class="abs" style="left:378px;top:369.23px;font-size:5.9px;line-height:8px;color:#878e9a;color:#a9afb9;letter-spacing:0.15px">Entreprise 4</div>
<div class="abs" style="left:448.8px;top:368.23px;font-size:5.9px;line-height:8px;color:#878e9a">CF400447</div>
<div class="abs" style="left:514.8px;top:368.23px;font-size:5.9px;line-height:8px;color:#878e9a">ALP00</div>
<div class="abs" style="left:571px;top:368.23px;font-size:5.9px;line-height:8px;color:#878e9a;letter-spacing:0.4px">Enregistreur de température</div>
<div class="abs" style="left:751.8px;top:368.23px;width:100px;text-align:right;font-size:5.9px;line-height:8px;color:#878e9a">50,00</div>
<div class="abs" style="left:861px;top:368.23px;font-size:5.9px;line-height:8px;color:#878e9a">P</div>
<div class="abs" style="left:833.8px;top:368.23px;width:100px;text-align:right;font-size:5.9px;line-height:8px;color:#878e9a">2 197,22</div>
<div class="abs" style="left:375px;top:395.85px;width:563px;height:1px;background:#f0f1f4"></div>
<div class="abs" style="left:378px;top:385.04px;font-size:5.9px;line-height:8px;color:#878e9a;color:#a9afb9;letter-spacing:0.15px">Entreprise 5</div>
<div class="abs" style="left:448.8px;top:384.04px;font-size:5.9px;line-height:8px;color:#878e9a">CF400447</div>
<div class="abs" style="left:514.8px;top:384.04px;font-size:5.9px;line-height:8px;color:#878e9a">ALP00</div>
<div class="abs" style="left:571px;top:384.04px;font-size:5.9px;line-height:8px;color:#878e9a;letter-spacing:0.4px">Enregistreur de température</div>
<div class="abs" style="left:751.8px;top:384.04px;width:100px;text-align:right;font-size:5.9px;line-height:8px;color:#878e9a">50,00</div>
<div class="abs" style="left:861px;top:384.04px;font-size:5.9px;line-height:8px;color:#878e9a">P</div>
<div class="abs" style="left:833.8px;top:384.04px;width:100px;text-align:right;font-size:5.9px;line-height:8px;color:#878e9a">7 490,51</div>
<div class="abs" style="left:375px;top:411.66px;width:563px;height:1px;background:#f0f1f4"></div>
<div class="abs" style="left:378px;top:400.85px;font-size:5.9px;line-height:8px;color:#878e9a;color:#a9afb9;letter-spacing:0.15px">Entreprise 6</div>
<div class="abs" style="left:448.8px;top:399.85px;font-size:5.9px;line-height:8px;color:#878e9a">CF400491</div>
<div class="abs" style="left:514.8px;top:399.85px;font-size:5.9px;line-height:8px;color:#878e9a">ALP00</div>
<div class="abs" style="left:571px;top:399.85px;font-size:5.9px;line-height:8px;color:#878e9a;letter-spacing:0.4px">Enregistreur de température</div>
<div class="abs" style="left:751.8px;top:399.85px;width:100px;text-align:right;font-size:5.9px;line-height:8px;color:#878e9a">60,00</div>
<div class="abs" style="left:861px;top:399.85px;font-size:5.9px;line-height:8px;color:#878e9a">P</div>
<div class="abs" style="left:833.8px;top:399.85px;width:100px;text-align:right;font-size:5.9px;line-height:8px;color:#878e9a">1 150,54</div>
<div class="abs" style="left:375px;top:427.47px;width:563px;height:1px;background:#f0f1f4"></div>
<div class="abs" style="left:378px;top:416.66px;font-size:5.9px;line-height:8px;color:#878e9a;color:#a9afb9;letter-spacing:0.15px">Entreprise 7</div>
<div class="abs" style="left:448.8px;top:415.66px;font-size:5.9px;line-height:8px;color:#878e9a">CF400750</div>
<div class="abs" style="left:514.8px;top:415.66px;font-size:5.9px;line-height:8px;color:#878e9a">ALP00</div>
<div class="abs" style="left:571px;top:415.66px;font-size:5.9px;line-height:8px;color:#878e9a;letter-spacing:0.4px">Enregistreur de température</div>
<div class="abs" style="left:751.8px;top:415.66px;width:100px;text-align:right;font-size:5.9px;line-height:8px;color:#878e9a">50,00</div>
<div class="abs" style="left:861px;top:415.66px;font-size:5.9px;line-height:8px;color:#878e9a">P</div>
<div class="abs" style="left:833.8px;top:415.66px;width:100px;text-align:right;font-size:5.9px;line-height:8px;color:#878e9a">1 149,72</div>
</div></body></html>
